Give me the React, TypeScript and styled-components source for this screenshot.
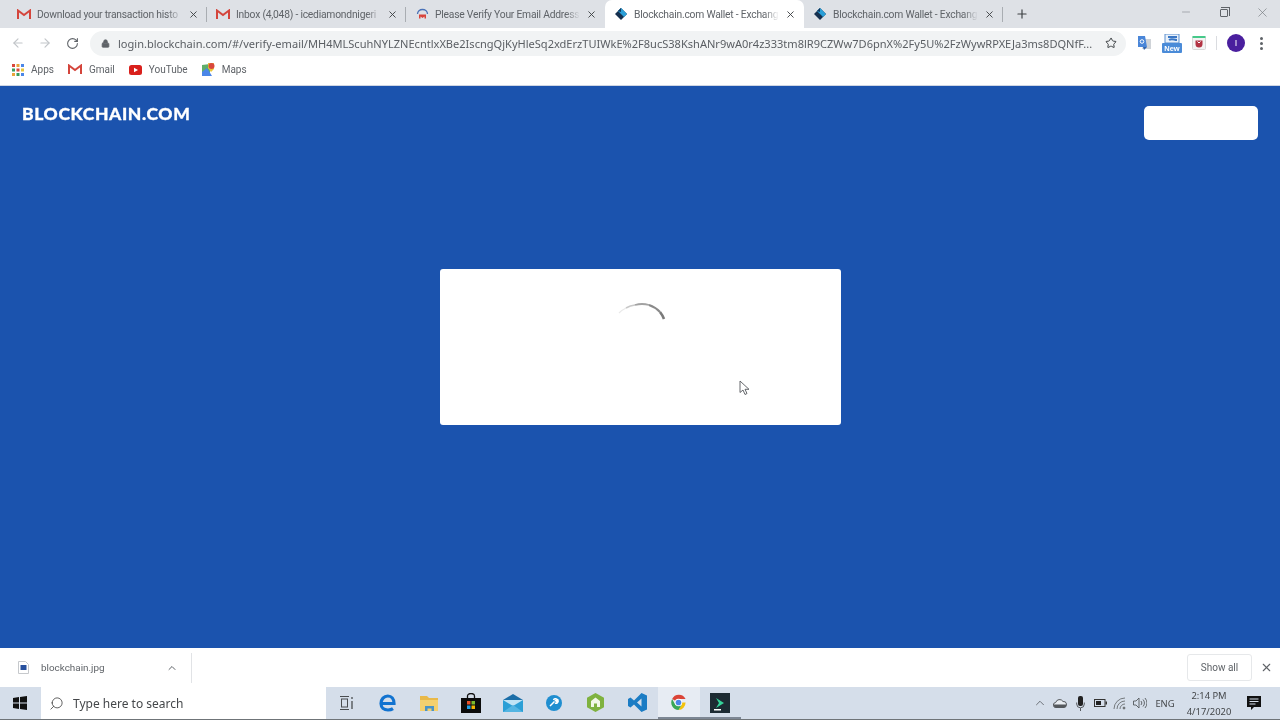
import React from 'react';
import styled, { createGlobalStyle } from 'styled-components';
import { ArrowLeft, ArrowRight, RotateCw, Lock, Star, X, Plus, ChevronUp, Search, Minus } from 'lucide-react';

const Global = createGlobalStyle`
  html, body { margin: 0; padding: 0; width: 1280px; height: 720px; overflow: hidden; background: #fff; }
  * { box-sizing: border-box; }
  body { font-family: "Noto Sans", "Open Sans", "Liberation Sans", sans-serif; }
`;

const Page = styled.div`
  width: 1280px; height: 720px; display: flex; flex-direction: column; overflow: hidden; filter: blur(0.35px);
`;

/* ---------- tab strip ---------- */
const TabStrip = styled.div`
  height: 28px; background: #dee1e6; display: flex; padding-left: 8px; flex: none;
`;
const Tab = styled.div<{ $active?: boolean; $sep?: boolean }>`
  width: 199px; height: 28px; display: flex; align-items: center; padding: 0 8px 0 9px;
  background: ${p => (p.$active ? '#fff' : 'transparent')};
  border-radius: ${p => (p.$active ? '7px 7px 0 0' : '0')};
  position: relative;
  ${p => p.$sep ? `&::after { content: ''; position: absolute; right: 0; top: 7px; height: 15px; width: 1px; background: #a9adb2; }` : ''}
`;
const TabFav = styled.div`
  width: 14px; height: 14px; flex: none; display: flex; align-items: center; justify-content: center;
`;
const TabTitle = styled.div`
  margin-left: 6px; width: 145px; flex: none; font-family: "Roboto", sans-serif; font-size: 10.3px; letter-spacing: -0.22px; color: #5f6368; white-space: nowrap; overflow: hidden;
  -webkit-mask-image: linear-gradient(to right, #000 90%, transparent 100%);
  mask-image: linear-gradient(to right, #000 90%, transparent 100%);
`;
const TabClose = styled.div`
  margin-left: 5px; width: 12px; height: 12px; flex: none; display: flex; align-items: center; justify-content: center; color: #3c4043;
`;
const NewTab = styled.div`
  margin-left: 12px; width: 14px; height: 28px; display: flex; align-items: center; justify-content: center; color: #3c4043;
`;
const WinControls = styled.div`
  margin-left: auto; display: flex; align-items: flex-start; color: #6f7378; padding-top: 4px; padding-right: 10px; gap: 22px;
`;
const WinBtn = styled.div`
  width: 16px; height: 16px; display: flex; align-items: center; justify-content: center;
`;
const RestoreIcon = styled.div`
  width: 8px; height: 8px; border: 1px solid #5f6368; border-radius: 1px; position: relative; background: #dee1e6; margin-top: 1px;
  &::before { content: ''; position: absolute; top: -3px; right: -3px; width: 8px; height: 8px; border-top: 1px solid #5f6368; border-right: 1px solid #5f6368; }
`;

/* ---------- toolbar ---------- */
const Toolbar = styled.div`
  height: 30px; background: #fff; display: flex; align-items: center; flex: none; padding-left: 11px;
`;
const NavBtn = styled.div<{ $dim?: boolean }>`
  width: 14px; height: 14px; margin-right: 13px; display: flex; align-items: center; justify-content: center;
  color: ${p => (p.$dim ? '#c2c5c9' : '#5f6368')};
`;
const Omnibox = styled.div`
  margin-left: -2px; width: 1036px; height: 25px; border-radius: 13px; background: #f1f3f4; display: flex; align-items: center;
  padding-left: 11px; color: #5f6368;
`;
const Url = styled.div`
  margin-left: 8px; width: 975px; flex: none; font-size: 11.05px; white-space: nowrap; overflow: hidden; color: #5a5e63;
`;
const StarBox = styled.div`
  margin-left: 12px; display: flex; color: #3c4043;
`;
const Extensions = styled.div`
  margin-left: 5px; display: flex; align-items: center;
`;
const Ext = styled.div`
  width: 27px; display: flex; align-items: center; justify-content: center; flex: none;
`;
const TbSep = styled.div`
  width: 1px; height: 14px; background: #dadce0; margin: 0 5px 0 4px; flex: none;
`;
const Avatar = styled.div`
  width: 18px; height: 18px; border-radius: 50%; background: #4a1f9e; color: #fff; font-family: "Liberation Sans", sans-serif; font-size: 9px; display: flex; align-items: center; justify-content: center; margin-left: 5px; flex: none;
`;
const Kebab = styled.div`
  margin-left: 15px; width: 3px; display: flex; flex-direction: column; gap: 2px; flex: none;
  span { width: 3px; height: 3px; border-radius: 50%; background: #5f6368; display: block; }
`;

/* ---------- bookmarks ---------- */
const Bookmarks = styled.div`
  height: 28px; background: #fff; display: flex; align-items: center; padding: 0 0 4px 12px; flex: none; border-bottom: 1px solid #cfd6e4;
`;
const Bookmark = styled.div`
  display: flex; align-items: center; gap: 7px; margin-right: 14px; font-family: "Roboto", sans-serif; font-size: 10px; color: #5f6368;
`;

/* ---------- main ---------- */
const Main = styled.div`
  flex: 1; background: #1b53ae; display: flex; flex-direction: column; min-height: 0;
`;
const Header = styled.div`
  display: flex; justify-content: space-between; align-items: flex-start; padding: 20px 22px 0 22px; height: 54px; flex: none;
`;
const Logo = styled.div`
  font-family: "Lato", "Open Sans", sans-serif; font-weight: 900; font-size: 17.5px; line-height: 16px; color: #fff; letter-spacing: 0.62px; -webkit-text-stroke: 0.3px #fff;
`;
const LoginBtn = styled.div`
  width: 114px; height: 34px; background: #fff; border-radius: 5px; flex: none;
`;
const Card = styled.div`
  width: 401px; height: 156px; margin: 129px 0 0 440px; background: #fff; border-radius: 3px; position: relative; display: flex; justify-content: center; padding: 33px 0 0 2px;
`;
const Cursor = styled.div`
  position: absolute; left: 299px; top: 110px; width: 12px; height: 16px;
`;

/* ---------- download bar ---------- */
const DownloadBar = styled.div`
  height: 39px; background: #fff; display: flex; align-items: center; flex: none; padding-left: 18px;
`;
const FileName = styled.div`
  margin-left: 12px; font-family: "Roboto", sans-serif; font-size: 9.9px; color: #5f6368; width: 124px;
`;
const DownloadItemEnd = styled.div`
  width: 20px; margin-left: -3px; display: flex; justify-content: center; color: #5f6368;
`;
const DlSep = styled.div`
  width: 1px; height: 30px; background: #e1e3e6; margin-left: 9px;
`;
const ShowAll = styled.div`
  margin-left: auto; width: 65px; height: 27px; border: 1px solid #e6e8ea; border-radius: 3px; font-family: "Roboto", sans-serif; font-size: 10px; color: #5f6368; display: flex; align-items: center; justify-content: center;
`;
const DlClose = styled.div`
  width: 28px; display: flex; justify-content: center; color: #5f6368;
`;

/* ---------- taskbar ---------- */
const Taskbar = styled.div`
  height: 33px; background: #d5deea; display: flex; align-items: center; flex: none; border-bottom: 1px solid #6f7478;
`;
const Start = styled.div`
  width: 41px; height: 32px; display: flex; align-items: center; justify-content: center;
  svg { margin-left: -1px; }
`;
const SearchBox = styled.div`
  width: 285px; height: 32px; background: #fff; display: flex; align-items: center; padding-left: 8px; color: #3f3f3f;
  font-size: 12px;
  span { margin-left: 9px; color: #44474a; }
  svg { transform: scaleX(-1); }
`;
const TaskItems = styled.div`
  display: flex; height: 32px;
`;
const TaskItem = styled.div<{ $active?: boolean; $open?: boolean }>`
  width: 41.5px; height: 32px; display: flex; align-items: center; justify-content: center; padding-top: 1px;
  background: ${p => (p.$active ? '#e7ecf3' : 'transparent')};
  border-bottom: 2px solid ${p => (p.$open ? '#7d8794' : 'transparent')};
`;
const Tray = styled.div`
  margin-left: auto; display: flex; align-items: center; height: 32px; padding-right: 10px;
`;
const TrayIcon = styled.div`
  width: 20px; display: flex; align-items: center; justify-content: center; color: #404448;
`;
const Lang = styled.div`
  width: 30px; text-align: center; font-size: 9.4px; color: #44474a;
`;
const Clock = styled.div`
  width: 58px; text-align: center; font-size: 9.4px; line-height: 16px; color: #44474a; padding-top: 1px;
`;
const Notif = styled.div`
  width: 32px; display: flex; justify-content: center;
`;

/* ---------- drawings ---------- */
const GmailIcon = () => (
  <svg width="14" height="11" viewBox="0 0 14 11">
    <path d="M1 10V1.500L7 6l6-4.500V10" fill="none" stroke="#d4453c" strokeWidth="2" strokeLinejoin="miter" />
  </svg>
);
const VerifyIcon = () => (
  <svg width="13" height="13" viewBox="0 0 13 13">
    <path d="M1.500 6a5 4.500 0 0 1 10 0" fill="none" stroke="#4a72b8" strokeWidth="1.300" />
    <path d="M3 6.500h7v4H8.500V8.500L6.500 10l-2-1.500v2H3z" fill="#d8443c" />
  </svg>
);
const BlockchainIcon = () => (
  <svg width="14" height="14" viewBox="0 0 14 14">
    <path d="M7 1l6 6-6 6-6-6z" fill="#15304f" />
    <path d="M7 1l6 6-3 3-6-6z" fill="#2a9fd8" />
    <path d="M4 4l3-3v4z" fill="#12395f" />
  </svg>
);
const AppsIcon = () => (
  <svg width="12" height="12" viewBox="0 0 12 12">
    {[0, 1, 2].flatMap(r => [0, 1, 2].map(c => (
      <rect key={`${r}${c}`} x={c * 4.500} y={r * 4.500} width="3" height="3"
        fill={['#d9473d', '#e8a33a', '#4a86e8', '#3b9d5d', '#d9473d', '#e8c63a', '#e8a33a', '#3b9d5d', '#4a86e8'][r * 3 + c]} />
    )))}
  </svg>
);
const YouTubeIcon = () => (
  <svg width="13" height="10" viewBox="0 0 13 10">
    <rect width="13" height="10" rx="2.500" fill="#d9201c" />
    <path d="M5 2.800 9 5 5 7.200z" fill="#fff" />
  </svg>
);
const MapsIcon = () => (
  <svg width="13" height="13" viewBox="0 0 13 13">
    <path d="M0 2l8-1v11l-8 1z" fill="#5fae6a" />
    <path d="M0 9l5-4 5 8H0z" fill="#4a86e8" />
    <path d="M6 0h6v6l-3 3-3-4z" fill="#e8c63a" />
    <circle cx="9.500" cy="3" r="3" fill="#d9473d" />
  </svg>
);
const TranslateIcon = () => (
  <svg width="15" height="17" viewBox="0 0 15 17">
    <path d="M8 4h6v10H5z" fill="#cfd3d8" />
    <path d="M1 1h7l2 11H1z" fill="#4a86d8" />
    <circle cx="5" cy="6.500" r="1.800" fill="none" stroke="#fff" strokeWidth="1" />
    <path d="M6 12h4l-3 3z" fill="#2f63ad" />
  </svg>
);
const NewExtIcon = () => (
  <svg width="20" height="19" viewBox="0 0 20 19">
    <path d="M3 0h14v9H3z" fill="#eaf1f9" stroke="#5a8fd0" strokeWidth="1" />
    <path d="M6 3h9M7 6c3-2 5 0 8 0" stroke="#3a77c5" strokeWidth="2" fill="none" />
    <rect y="9" width="20" height="10" rx="1" fill="#4a8bd8" />
    <text x="10" y="17" textAnchor="middle" fontSize="7.500" fontWeight="700" fill="#fff" fontFamily="Liberation Sans">New</text>
  </svg>
);
const PocketIcon = () => (
  <svg width="14" height="14" viewBox="0 0 14 14">
    <rect x="0.500" y="0.500" width="13" height="13" rx="1" fill="#f3f3f3" stroke="#d8d8d8" />
    <rect x="0.500" y="0" width="13" height="2" fill="#46c98a" />
    <path d="M3.500 4.500h7v3.500a3.500 3.500 0 0 1-7 0z" fill="#b23343" />
    <path d="M5.500 5.500 7 7l1.500-1.500" stroke="#fff" strokeWidth="1" fill="none" />
  </svg>
);
const FileIcon = () => (
  <svg width="11" height="13" viewBox="0 0 11 13">
    <path d="M.5.500h7l3 3v9H.5z" fill="#fff" stroke="#c6c9cc" />
    <rect x="2.500" y="4" width="6" height="5" fill="#27509e" />
  </svg>
);
const WinLogo = () => (
  <svg width="14" height="14" viewBox="0 0 14 14">
    <path d="M0 2l6-.9v5.500H0zM7 1l7-1v6.600H7zM0 7.400h6V13l-6-.9zM7 7.400h7V14l-7-1z" fill="#111" />
  </svg>
);
const TaskView = () => (
  <svg width="16" height="14" viewBox="0 0 16 14" fill="none" stroke="#4a4d50">
    <path d="M1 .5h9M1 13.500h9" /><rect x="2.500" y="3" width="6" height="8" />
    <path d="M13 1v2M13 5v8" strokeWidth="1.300" />
  </svg>
);
const EdgeIcon = () => (
  <svg width="18" height="18" viewBox="0 0 18 18">
    <path d="M2 9.500h13C15 5 12.500 2 8.800 2 5 2 2 5.200 2 9.500c0 4 3 6.500 7 6.500 2 0 3.700-.5 5-1.400" fill="none" stroke="#1273d0" strokeWidth="3.200" />
  </svg>
);
const FolderIcon = () => (
  <svg width="19" height="16" viewBox="0 0 19 16">
    <path d="M0 1h7l2 2h9v2H0z" fill="#e9b949" />
    <rect y="5" width="18" height="11" fill="#f4d06f" />
    <path d="M5 16v-5h9v5h-2.500v-2.500h-4V16z" fill="#4a93c7" />
  </svg>
);
const StoreIcon = () => (
  <svg width="20" height="20" viewBox="0 0 20 20">
    <path d="M6.500 5V3a3.500 2.500 0 0 1 7 0v2" fill="none" stroke="#111" strokeWidth="1.300" />
    <rect y="5" width="20" height="15" fill="#0c0c0c" />
    <rect x="6" y="8" width="3.500" height="3.500" fill="#e8502a" />
    <rect x="10.500" y="8" width="3.500" height="3.500" fill="#7cb92c" />
    <rect x="6" y="12.500" width="3.500" height="3.500" fill="#1da1e8" />
    <rect x="10.500" y="12.500" width="3.500" height="3.500" fill="#f4b400" />
  </svg>
);
const MailIcon = () => (
  <svg width="20" height="18" viewBox="0 0 20 18">
    <path d="M10 0l10 6H0z" fill="#1b6ea8" />
    <rect y="6" width="20" height="12" fill="#2b9fd6" />
    <path d="M0 6l10 6 10-6" fill="#bfe3f5" />
    <path d="M0 18l10-7 10 7z" fill="#54b5e2" />
  </svg>
);
const TeamIcon = () => (
  <svg width="16" height="16" viewBox="0 0 16 16">
    <circle cx="8" cy="8" r="8" fill="#1f8ed0" />
    <path d="M4 11l4.500-4.500M7.500 5a2.200 2.200 0 0 1 3.500-.8L9.500 5.500l1 1L12 5.200A2.200 2.200 0 0 1 9 8" stroke="#fff" strokeWidth="1.500" fill="none" />
  </svg>
);
const NodeIcon = () => (
  <svg width="17" height="19" viewBox="0 0 17 19">
    <path d="M8.500 0l8.500 4.800v9.400L8.500 19 0 14.200V4.800z" fill="#7fb23f" />
    <path d="M8.500 4.500L13 8v6h-3v-3.500H7V14H4V8z" fill="#f2f7e6" />
  </svg>
);
const VsCode = () => (
  <svg width="19" height="19" viewBox="0 0 19 19">
    <path d="M13.500 0L19 2.500v14L13.500 19 6 11.500 2.500 14.500 0 13V6l2.500-1.500L6 7.500zM13.500 5.500L9 9.500l4.500 4z" fill="#1b7cc4" />
    <path d="M2.500 7v5l2.200-2.500z" fill="#1b7cc4" />
  </svg>
);
const ChromeIcon = () => (
  <svg width="17" height="17" viewBox="0 0 48 48">
    <path d="M24 24L6 14A21 21 0 0 1 44 14H24z" fill="#db4437" />
    <path d="M24 24h20A21 21 0 0 1 24 45l9-15z" fill="#f4c20d" />
    <path d="M24 24l-9 6-9-16A21 21 0 0 0 24 45l9-15z" fill="#3aa757" />
    <circle cx="24" cy="24" r="10.500" fill="#fff" />
    <circle cx="24" cy="24" r="8" fill="#4a86e8" />
  </svg>
);
const PycharmIcon = () => (
  <svg width="20" height="20" viewBox="0 0 20 20">
    <rect width="20" height="20" fill="#1d2b33" />
    <path d="M6 5l8 5-8 5 3-5z" fill="#35d39a" />
    <rect x="4" y="16" width="7" height="1.500" fill="#fff" />
  </svg>
);
const CloudIcon = () => (
  <svg width="14" height="10" viewBox="0 0 14 10">
    <path d="M3 9.500a2.500 2.500 0 0 1-.3-5A4 4 0 0 1 10 3.500a3 3 0 0 1 1 6z" fill="#e9edf2" stroke="#55595d" />
    <path d="M1 6.500h12v1.500a1.500 1.500 0 0 1-1.500 1.500h-9A1.500 1.500 0 0 1 1 8z" fill="#55595d" />
  </svg>
);
const MicIcon = () => (
  <svg width="9" height="15" viewBox="0 0 9 15">
    <rect x="2" y="0" width="5" height="10" rx="2" fill="#222" />
    <path d="M.7 6.500v1.500a3.800 3.800 0 0 0 7.600 0V6.500M4.500 12v3" stroke="#55595d" fill="none" />
  </svg>
);
const BatteryIcon = () => (
  <svg width="13" height="8" viewBox="0 0 13 8">
    <rect x=".5" y=".5" width="10.500" height="7" fill="none" stroke="#333" />
    <rect x="2" y="2" width="5" height="4" fill="#222" />
    <rect x="11.500" y="2.500" width="1.500" height="3" fill="#333" />
  </svg>
);
const WifiIcon = () => (
  <svg width="14" height="13" viewBox="0 0 14 13" fill="none" stroke="#6a6e72" strokeWidth=".9">
    <path d="M1 12A11 11 0 0 1 12 1M4 12a8 8 0 0 1 8-8M7 12a5 5 0 0 1 5-5" />
    <circle cx="11" cy="11" r="1" fill="#6a6e72" />
  </svg>
);
const SpeakerIcon = () => (
  <svg width="14" height="12" viewBox="0 0 14 12" fill="none" stroke="#55595d" strokeWidth=".9">
    <path d="M.5 4v4H3l3 3V1L3 4z" />
    <path d="M8 4a3 3 0 0 1 0 4M10 2.500a5 5 0 0 1 0 7M12 1a8 8 0 0 1 0 10" />
  </svg>
);
const NotifIcon = () => (
  <svg width="14" height="14" viewBox="0 0 14 14">
    <path d="M0 0h14v11H7l-3 3v-3H0z" fill="#111" />
    <path d="M2.500 3h9M2.500 5.500h9M2.500 8h6" stroke="#d5deea" strokeWidth="1" />
  </svg>
);
const CursorIcon = () => (
  <svg width="12" height="16" viewBox="0 0 12 16">
    <path d="M1 1v11.500l3-2.500 2 4.500 2-1-2-4.200h4z" fill="#fff" stroke="#55585c" strokeWidth=".9" strokeLinejoin="round" />
  </svg>
);
const Spinner = () => (
  <svg width="54" height="24" viewBox="0 0 54 24">
    <g fill="none" strokeLinecap="butt">
      <path d="M4 11A26 26 0 0 1 11 6" stroke="#e9e9e9" strokeWidth="1.200" />
      <path d="M11 6A26 26 0 0 1 20 3" stroke="#c8c8c8" strokeWidth="1.500" />
      <path d="M20 3A26 26 0 0 1 34 3" stroke="#a2a2a2" strokeWidth="1.800" />
      <path d="M34 3A26 26 0 0 1 45 10" stroke="#8a8a8a" strokeWidth="2.200" />
      <path d="M45 10A26 26 0 0 1 49 17" stroke="#7a7a7a" strokeWidth="2.600" />
    </g>
  </svg>
);

const tabs = [
  { icon: <GmailIcon />, title: 'Download your transaction histo', sep: true },
  { icon: <GmailIcon />, title: 'Inbox (4,048) - icediamondnigeri', sep: true },
  { icon: <VerifyIcon />, title: 'Please Verify Your Email Address' },
  { icon: <BlockchainIcon />, title: 'Blockchain.com Wallet - Exchang', active: true },
  { icon: <BlockchainIcon />, title: 'Blockchain.com Wallet - Exchang', sep: true },
];

const taskApps = [
  { icon: <TaskView /> }, { icon: <EdgeIcon /> }, { icon: <FolderIcon /> }, { icon: <StoreIcon /> },
  { icon: <MailIcon /> }, { icon: <TeamIcon /> }, { icon: <NodeIcon /> }, { icon: <VsCode /> },
  { icon: <ChromeIcon />, active: true, open: true }, { icon: <PycharmIcon />, open: true },
];

export default function App() {
  return (
    <Page>
      <Global />
      <TabStrip>
        {tabs.map((t, i) => (
          <Tab key={i} $active={t.active} $sep={t.sep}>
            <TabFav>{t.icon}</TabFav>
            <TabTitle>{t.title}</TabTitle>
            <TabClose><X size={11} strokeWidth={2} /></TabClose>
          </Tab>
        ))}
        <NewTab><Plus size={14} strokeWidth={2} /></NewTab>
        <WinControls>
          <WinBtn><Minus size={12} strokeWidth={1} /></WinBtn>
          <WinBtn><RestoreIcon /></WinBtn>
          <WinBtn><X size={15} strokeWidth={1} /></WinBtn>
        </WinControls>
      </TabStrip>
      <Toolbar>
        <NavBtn $dim><ArrowLeft size={14} /></NavBtn>
        <NavBtn $dim><ArrowRight size={14} /></NavBtn>
        <NavBtn><RotateCw size={13} /></NavBtn>
        <Omnibox>
          <Lock size={9} fill="#5f6368" />
          <Url>login.blockchain.com/#/verify-email/MH4MLScuhNYLZNEcntlxXBe2IscngQjKyHleSq2xdErzTUIWkE%2F8ucS38KshANr9wA0r4z333tm8lR9CZWw7D6pnX%2Fy5U%2FzWywRPXEJa3ms8DQNfF...</Url>
          <StarBox><Star size={12} /></StarBox>
        </Omnibox>
        <Extensions>
          <Ext><TranslateIcon /></Ext>
          <Ext><NewExtIcon /></Ext>
          <Ext><PocketIcon /></Ext>
        </Extensions>
        <TbSep />
        <Avatar>I</Avatar>
        <Kebab><span /><span /><span /></Kebab>
      </Toolbar>
      <Bookmarks>
        <Bookmark><AppsIcon />Apps</Bookmark>
        <Bookmark><GmailIcon />Gmail</Bookmark>
        <Bookmark><YouTubeIcon />YouTube</Bookmark>
        <Bookmark><MapsIcon />Maps</Bookmark>
      </Bookmarks>
      <Main>
        <Header>
          <Logo>BLOCKCHAIN.COM</Logo>
          <LoginBtn />
        </Header>
        <Card>
          <Spinner />
          <Cursor><CursorIcon /></Cursor>
        </Card>
      </Main>
      <DownloadBar>
        <FileIcon />
        <FileName>blockchain.jpg</FileName>
        <DownloadItemEnd><ChevronUp size={12} /></DownloadItemEnd>
        <DlSep />
        <ShowAll>Show all</ShowAll>
        <DlClose><X size={13} /></DlClose>
      </DownloadBar>
      <Taskbar>
        <Start><WinLogo /></Start>
        <SearchBox>
          <Search size={15} strokeWidth={1.300} />
          <span>Type here to search</span>
        </SearchBox>
        <TaskItems>
          {taskApps.map((a, i) => (
            <TaskItem key={i} $active={a.active} $open={a.open}>{a.icon}</TaskItem>
          ))}
        </TaskItems>
        <Tray>
          <TrayIcon><ChevronUp size={14} strokeWidth={1.200} /></TrayIcon>
          <TrayIcon><CloudIcon /></TrayIcon>
          <TrayIcon><MicIcon /></TrayIcon>
          <TrayIcon><BatteryIcon /></TrayIcon>
          <TrayIcon><WifiIcon /></TrayIcon>
          <TrayIcon><SpeakerIcon /></TrayIcon>
          <Lang>ENG</Lang>
          <Clock>2:14 PM<br />4/17/2020</Clock>
          <Notif><NotifIcon /></Notif>
        </Tray>
      </Taskbar>
    </Page>
  );
}
